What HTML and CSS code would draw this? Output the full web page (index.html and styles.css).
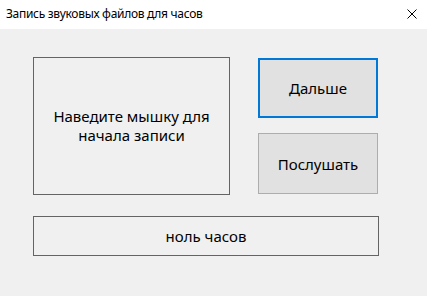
FILE: index.html
```html
<!DOCTYPE html>
<html lang="ru">
<head>
<meta charset="utf-8">
<title>Запись звуковых файлов для часов</title>
<link rel="stylesheet" href="styles.css">
</head>
<body>
<div class="window">
  <div class="titlebar">
    <span class="title">Запись звуковых файлов для часов</span>
    <span class="close">
      <svg width="10" height="10" viewBox="0 0 10 10"><path d="M0.5 0.5 L9.5 9.5 M9.5 0.5 L0.5 9.5" stroke="#000" stroke-width="1" fill="none"/></svg>
    </span>
  </div>
  <div class="content">
    <div class="record">Наведите мышку для<br>начала записи</div>
    <div class="side">
      <div class="btn btn-default">Дальше</div>
      <div class="btn btn-listen">Послушать</div>
    </div>
    <div class="status">ноль часов</div>
  </div>
</div>
</body>
</html>
```
FILE: styles.css
```css
html, body {
  margin: 0;
  padding: 0;
}
body {
  width: 427px;
  height: 296px;
  background: #f0f0f0;
  font-family: "Noto Sans", "Open Sans", sans-serif;
  color: #000;
  overflow: hidden;
}
.titlebar {
  height: 29px;
  background: #fff;
  display: flex;
  align-items: center;
  justify-content: space-between;
  padding: 0 9px 0 6px;
}
.title {
  font-size: 12px;
  letter-spacing: -0.3px;
  position: relative;
  top: -1px;
}
.close {
  display: flex;
  width: 10px;
  height: 10px;
  margin-right: 1px;
  position: relative;
  top: -1px;
}
.content {
  display: grid;
  grid-template-columns: 197px 120px;
  column-gap: 28px;
  row-gap: 21px;
  padding: 28px 0 0 33px;
}
.record {
  box-sizing: border-box;
  height: 138px;
  border: 1px solid #646464;
  display: flex;
  align-items: center;
  justify-content: center;
  text-align: center;
  font-size: 15px;
  line-height: 19px;
}
.side {
  display: flex;
  flex-direction: column;
  gap: 15px;
  padding-top: 1px;
}
.btn {
  box-sizing: border-box;
  background: #e1e1e1;
  display: flex;
  align-items: center;
  justify-content: center;
  font-size: 15px;
}
.btn-default {
  height: 60px;
  border: 2px solid #0078d7;
}
.btn-listen {
  height: 61px;
  border: 1px solid #adadad;
}
.status {
  grid-column: 1 / 3;
  box-sizing: border-box;
  width: 346px;
  height: 40px;
  border: 1px solid #646464;
  display: flex;
  align-items: center;
  justify-content: center;
  font-size: 15px;
}
```
